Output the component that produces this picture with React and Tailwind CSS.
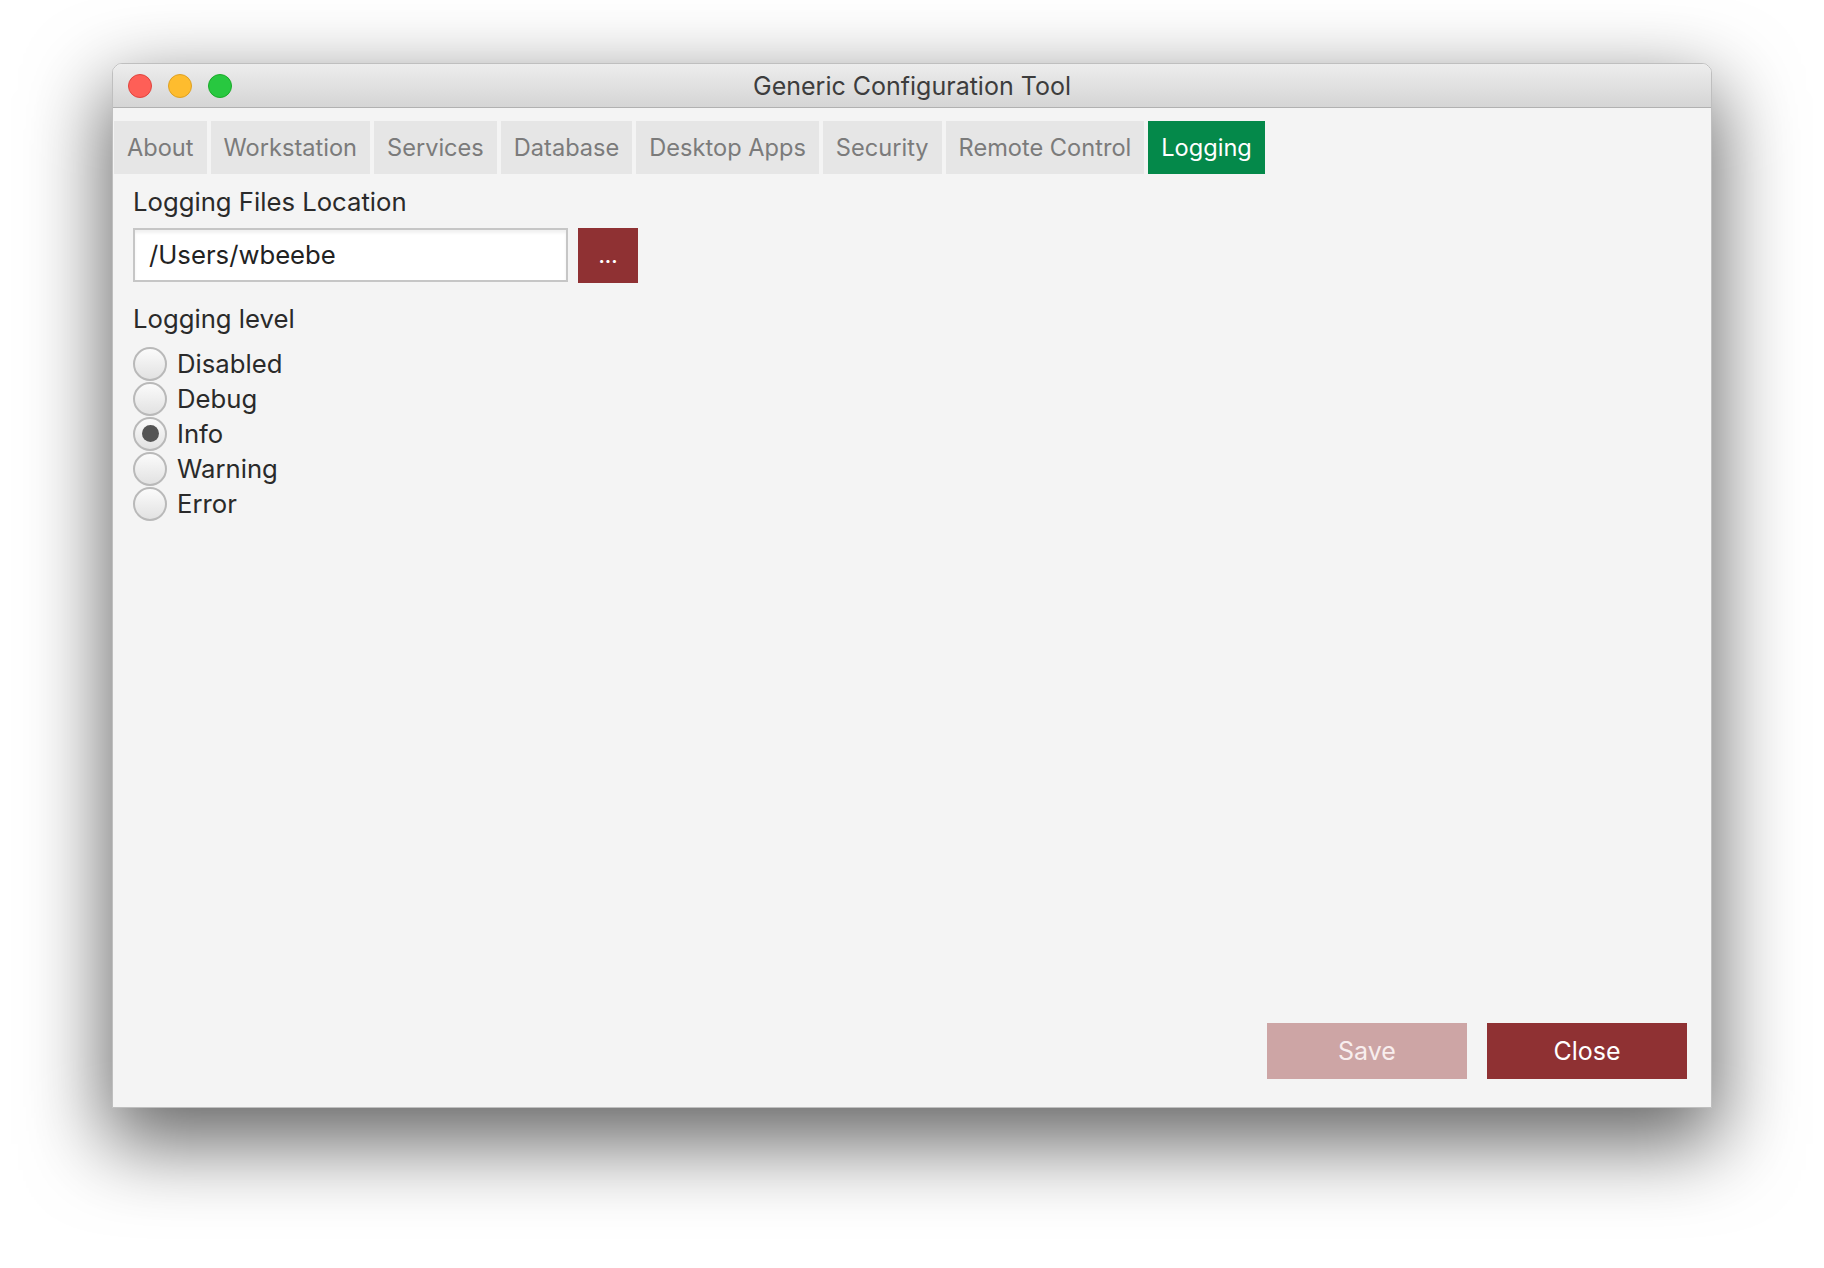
import React, { useState } from 'react';

const tabs = ['About', 'Workstation', 'Services', 'Database', 'Desktop Apps', 'Security', 'Remote Control', 'Logging'];
const levels = ['Disabled', 'Debug', 'Info', 'Warning', 'Error'];

const Radio = ({ label, checked, onSelect }) => (
  <div className="flex items-center h-[35px] cursor-pointer" onClick={onSelect}>
    <span className="w-[34px] h-[34px] rounded-full border-2 border-[#b9b9b9] bg-gradient-to-b from-[#fbfbfb] to-[#e2e2e2] flex items-center justify-center">
      {checked && <span className="w-[17px] h-[17px] rounded-full bg-[#545454]" />}
    </span>
    <span className="ml-[10px] text-[#2a2a2a]">{label}</span>
  </div>
);

export default function App() {
  const [active, setActive] = useState('Logging');
  const [level, setLevel] = useState('Info');

  return (
    <div className="min-h-screen bg-white flex justify-center pt-[63px] font-['Inter','Liberation_Sans',sans-serif] text-[25px] leading-[30px]">
      <div className="w-[1600px] h-[1045px] flex flex-col rounded-t-[10px] border border-black/25 shadow-[0_30px_80px_6px_rgba(0,0,0,0.6)] overflow-hidden">
        {/* Title bar */}
        <div className="h-[44px] shrink-0 grid grid-cols-[1fr_auto_1fr] items-center bg-gradient-to-b from-[#ededed] to-[#d5d5d5] border-b border-[#b1b1b1]">
          <div className="flex items-center gap-4 pl-[15px]">
            <span className="w-[24px] h-[24px] rounded-full bg-[#fe5f57] border border-[#e0443e]" />
            <span className="w-[24px] h-[24px] rounded-full bg-[#febc2e] border border-[#dea123]" />
            <span className="w-[24px] h-[24px] rounded-full bg-[#28c840] border border-[#1aab29]" />
          </div>
          <div className="text-[#3d3d3d]">Generic Configuration Tool</div>
          <div />
        </div>

        {/* Body */}
        <div className="flex-1 flex flex-col bg-[#f4f4f4] text-[25.7px]">
          <div className="flex gap-1 mt-[13px] ml-[1px] text-[23.6px]">
            {tabs.map((t) => (
              <button
                key={t}
                onClick={() => setActive(t)}
                className={`h-[53px] px-[13px] ${active === t ? 'bg-[#04894a] text-white' : 'bg-[#e6e6e6] text-[#7b7b7b]'}`}
              >
                {t}
              </button>
            ))}
          </div>

          <div className="pl-5 pt-[13px]">
            <div className="text-[#2a2a2a]">Logging Files Location</div>
            <div className="flex mt-[11px]">
              <div className="w-[435px] h-[54px] border-2 border-[#c6c6c6] bg-white shadow-[inset_0_3px_3px_rgba(0,0,0,0.06)] flex items-center pl-[14px] text-[#222]">
                /Users/wbeebe
              </div>
              <button className="ml-[10px] w-[60px] h-[55px] bg-[#8f3133] text-white text-[20px] leading-none font-semibold">...</button>
            </div>

            <div className="mt-[21px] text-[#2a2a2a]">Logging level</div>
            <div className="mt-[12px] flex flex-col">
              {levels.map((l) => (
                <Radio key={l} label={l} checked={level === l} onSelect={() => setLevel(l)} />
              ))}
            </div>
          </div>

          <div className="mt-auto flex justify-end gap-5 pr-6 pb-7 text-[25px]">
            <button className="w-[200px] h-[56px] bg-[#cda5a5] text-[#f8eeee]">Save</button>
            <button className="w-[200px] h-[56px] bg-[#8f3133] text-white">Close</button>
          </div>
        </div>
      </div>
    </div>
  );
}
